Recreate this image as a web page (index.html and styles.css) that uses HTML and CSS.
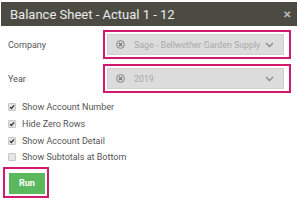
FILE: index.html
```html
<!DOCTYPE html>
<html>
<head>
<meta charset="utf-8">
<link rel="stylesheet" href="styles.css">
</head>
<body>
<div class="header">
  <span class="title">Balance Sheet - Actual 1 - 12</span>
  <span class="close">&#x2715;</span>
</div>
<div class="form">
  <div class="row">
    <div class="label">Company</div>
    <div class="hl">
      <div class="select">
        <svg class="clear" width="9" height="9" viewBox="0 0 10 10"><circle cx="5" cy="5" r="4.3" fill="none" stroke="#777" stroke-width="1"/><path d="M3.3 3.3L6.7 6.7M6.7 3.3L3.3 6.7" stroke="#666" stroke-width="1.2"/></svg>
        <span class="value">Sage - Bellwether Garden Supply</span>
        <svg class="chev" width="9" height="6" viewBox="0 0 9 6"><path d="M1 1L4.5 4.5L8 1" fill="none" stroke="#888" stroke-width="1.3"/></svg>
      </div>
    </div>
  </div>
  <div class="row">
    <div class="label">Year</div>
    <div class="hl">
      <div class="select">
        <svg class="clear" width="9" height="9" viewBox="0 0 10 10"><circle cx="5" cy="5" r="4.3" fill="none" stroke="#777" stroke-width="1"/><path d="M3.3 3.3L6.7 6.7M6.7 3.3L3.3 6.7" stroke="#666" stroke-width="1.2"/></svg>
        <span class="value">2019</span>
        <svg class="chev" width="9" height="6" viewBox="0 0 9 6"><path d="M1 1L4.5 4.5L8 1" fill="none" stroke="#888" stroke-width="1.3"/></svg>
      </div>
    </div>
  </div>
  <div class="checks">
    <div class="check"><span class="box on"><svg width="6" height="6" viewBox="0 0 7 7"><path d="M1.2 3.6L2.8 5.2L5.9 1.6" fill="none" stroke="#333" stroke-width="1.5"/></svg></span>Show Account Number</div>
    <div class="check"><span class="box on"><svg width="6" height="6" viewBox="0 0 7 7"><path d="M1.2 3.6L2.8 5.2L5.9 1.6" fill="none" stroke="#333" stroke-width="1.5"/></svg></span>Hide Zero Rows</div>
    <div class="check"><span class="box on"><svg width="6" height="6" viewBox="0 0 7 7"><path d="M1.2 3.6L2.8 5.2L5.9 1.6" fill="none" stroke="#333" stroke-width="1.5"/></svg></span>Show Account Detail</div>
    <div class="check"><span class="box"></span>Show Subtotals at Bottom</div>
  </div>
  <div class="runhl"><button class="run">Run</button></div>
</div>
</body>
</html>
```
FILE: styles.css
```css
html, body {
  margin: 0;
  padding: 0;
  background: #fff;
  font-family: Roboto, "Liberation Sans", sans-serif;
}
.header {
  margin: 2px 3px 0 1px;
  height: 24px;
  background: #4b4b44;
  display: flex;
  align-items: center;
  justify-content: space-between;
  padding: 0 6px 0 9px;
}
.title {
  color: #ececec;
  font-size: 13px;
}
.close {
  color: #bdbdbd;
  font-size: 10px;
  font-weight: bold;
}
.form {
  padding: 4px 0 0 0;
}
.row {
  display: flex;
  align-items: center;
  margin-bottom: 5px;
}
.label {
  width: 103px;
  padding-left: 8px;
  box-sizing: border-box;
  font-size: 9px;
  color: #555;
}
.hl {
  width: 188px;
  box-sizing: border-box;
  border: 2px solid #d3196b;
  padding: 2px 5px 2px 2px;
}
.select {
  height: 21px;
  box-sizing: border-box;
  background: #dcdcdc;
  border: 1px solid #d0d0d0;
  display: flex;
  align-items: center;
  padding: 0 9px 0 8px;
}
.clear {
  flex: none;
}
.value {
  flex: 1;
  margin-left: 9px;
  font-size: 8.8px;
  color: #a9a9a9;
  white-space: nowrap;
}
.chev {
  flex: none;
}
.checks {
  padding: 1px 0 0 8px;
}
.check {
  display: flex;
  align-items: center;
  height: 16.7px;
  font-size: 9px;
  color: #555;
}
.box {
  width: 6px;
  height: 6px;
  border: 1px solid #c8c8c8;
  background: #e4e4e4;
  border-radius: 1px;
  margin-right: 6px;
  display: flex;
  align-items: center;
  justify-content: center;
}
.box svg { display: block; }
.runhl {
  margin: 1px 0 0 3px;
  width: 46px;
  height: 31px;
  box-sizing: border-box;
  border: 2px solid #d3196b;
  padding: 4px 3px 3px 4px;
}
.run {
  display: block;
  width: 36px;
  height: 21px;
  border: none;
  background: #5cb85c;
  color: #fff;
  font-family: Roboto, "Liberation Sans", sans-serif;
  font-size: 9px;
  font-weight: bold;
  padding: 0;
}
```
